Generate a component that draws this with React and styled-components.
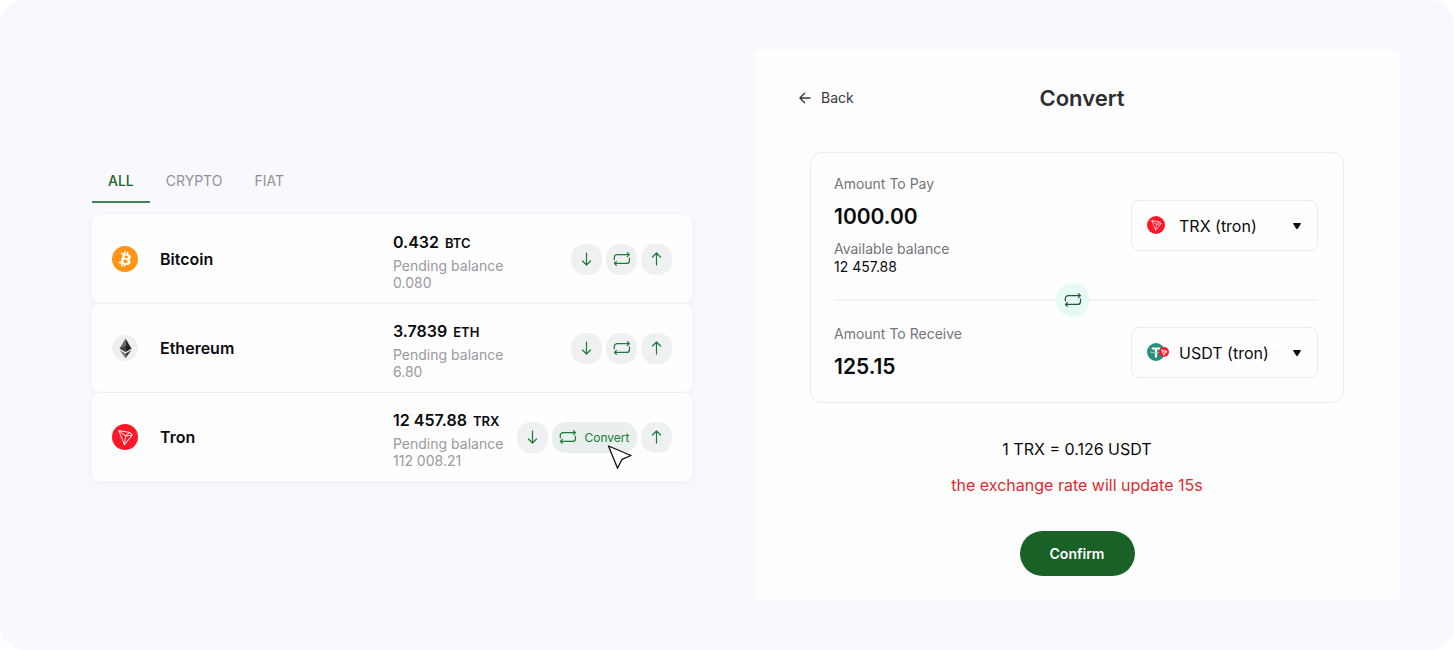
import React, { useState } from "react"
import styled, { createGlobalStyle } from "styled-components"

const GlobalStyle = createGlobalStyle`
  * {
    box-sizing: border-box;
  }

  body {
    margin: 0;
    background: #fff;
    font-family: Inter, "Liberation Sans", sans-serif;
    color: #0b0b0e;
  }

  button, input, select {
    font-family: inherit;
    color: inherit;
  }

  button {
    cursor: pointer;
  }
`

const Stage = styled.main`
  display: grid;
  grid-template-columns: 600fr 644fr;
  column-gap: 63px;
  align-items: center;
  min-height: 100vh;
  padding: 51px 55px 50px 92px;
  border-radius: 24px;
  background: #f9f8fe;
`

const Tabs = styled.div`
  display: flex;
  margin-bottom: 12px;
`

const Tab = styled.button`
  padding: 0 16px 9px;
  border: 0;
  border-bottom: 2px solid ${p => (p.$active ? "#4a7f56" : "transparent")};
  background: none;
  color: ${p => (p.$active ? "#17642b" : "#929196")};
  font-size: 14px;
  font-weight: ${p => (p.$active ? 500 : 400)};
  line-height: 22px;
`

const WalletList = styled.ul`
  display: flex;
  flex-direction: column;
  gap: 1px;
  margin: 0;
  padding: 0;
  list-style: none;
`

const WalletRow = styled.li`
  display: grid;
  grid-template-columns: 26px 211fr 279fr;
  column-gap: 22px;
  align-items: center;
  height: 88px;
  padding: 0 20px;
  border-radius: 8px;
  background: #fefefe;
  box-shadow: 0 1px 6px rgba(60, 50, 90, 0.06);
`

const WalletName = styled.h2`
  margin: 0;
  font-size: 16px;
  font-weight: 600;
  line-height: 20px;
`

const WalletDetails = styled.div`
  display: flex;
  align-items: center;
  justify-content: space-between;
`

const Balance = styled.div`
  padding-top: 4px;
  white-space: nowrap;
`

const Amount = styled.p`
  margin: 0 0 4px;
  font-size: 16px;
  font-weight: 600;
  line-height: 20px;

  span {
    margin-left: 6px;
    font-size: 13px;
  }
`

const Pending = styled.p`
  margin: 0;
  color: #9a999d;
  font-size: 14px;
  line-height: 17px;
`

const Actions = styled.div`
  display: flex;
  gap: 4px;
`

const ActionButton = styled.button`
  display: flex;
  align-items: center;
  justify-content: center;
  gap: 7px;
  width: ${p => (p.$wide ? "85px" : "31px")};
  height: 31px;
  padding: 0;
  border: 0;
  border-radius: 14px;
  background: ${p => (p.$wide ? "#e9efec" : "#eff0f2")};
  color: #1b7a37;
  font-size: 12px;
`

const ActionSlot = styled.div`
  position: relative;
`

const Pointer = styled.svg`
  position: absolute;
  top: 22px;
  left: 54px;
  pointer-events: none;
`

const Panel = styled.section`
  display: flex;
  flex-direction: column;
  min-height: 549px;
  background: #fefefe;
  box-shadow: 0 0 8px #fdfdff;
`

const PanelHeader = styled.header`
  display: grid;
  grid-template-columns: 1fr auto 1fr;
  align-items: center;
  padding: 33px 34px 0 44px;
`

const BackLink = styled.a`
  display: flex;
  align-items: center;
  gap: 10px;
  color: #38373c;
  font-size: 14px;
  line-height: 20px;
  text-decoration: none;
`

const Title = styled.h1`
  margin: 0;
  color: #2e2d32;
  font-size: 22px;
  font-weight: 600;
  line-height: 28px;
`

const ConvertForm = styled.form`
  display: flex;
  flex-direction: column;
  align-items: center;
  padding: 40px 55px 24px;
`

const ConvertBox = styled.div`
  width: 100%;
  padding: 22px 25px 22px 23px;
  border: 1px solid #ececef;
  border-radius: 12px;
`

const Side = styled.div`
  display: flex;
  align-items: center;
  justify-content: space-between;
`

const Label = styled.label`
  display: block;
  color: #75747a;
  font-size: 14px;
  line-height: 18px;
`

const AmountInput = styled.input`
  display: block;
  width: 200px;
  height: 26px;
  margin: 11px 0 0;
  padding: 0;
  border: 0;
  outline: 0;
  background: none;
  font-size: 21px;
  font-weight: 600;
  line-height: 26px;
`

const Available = styled.div`
  margin-top: 10px;
  color: #75747a;
  font-size: 14px;
  line-height: 18px;

  strong {
    display: block;
    color: #0b0b0e;
    font-weight: 400;
  }
`

const SelectWrap = styled.div`
  position: relative;
  width: 187px;

  select {
    width: 100%;
    height: 51px;
    padding: 0 40px 0 47px;
    border: 1px solid #ececef;
    border-radius: 8px;
    background: #fefefe;
    font-size: 16px;
    appearance: none;
  }
`

const SelectIcon = styled.span`
  position: absolute;
  top: 16px;
  left: 16px;
  display: flex;
  pointer-events: none;
`

const Caret = styled.svg`
  position: absolute;
  top: 22px;
  right: 16px;
  pointer-events: none;
`

const Divider = styled.div`
  display: grid;
  grid-template-columns: 223fr 34px 229fr;
  align-items: center;
  margin: 7px 0 8px;

  &::before,
  &::after {
    content: "";
    height: 2px;
    background: #f4f4f6;
  }
`

const SwapButton = styled.button`
  display: flex;
  align-items: center;
  justify-content: center;
  height: 34px;
  padding: 0;
  border: 0;
  border-radius: 50%;
  background: #e8faf6;
  color: #1c5c2a;
`

const Rate = styled.p`
  margin: 36px 0 0;
  font-size: 16px;
  line-height: 20px;
`

const RateNotice = styled.p`
  margin: 16px 0 0;
  color: #dc2a30;
  font-size: 16px;
  line-height: 20px;
`

const ConfirmButton = styled.button`
  width: 115px;
  height: 45px;
  margin-top: 36px;
  border: 0;
  border-radius: 23px;
  background: #196127;
  color: #fff;
  font-size: 14px;
  font-weight: 600;
`

const BitcoinIcon = () => (
  <svg width="26" height="26" viewBox="0 0 32 32" aria-hidden="true">
    <circle cx="16" cy="16" r="16" fill="#ff9416" />
    <path
      fill="#fff"
      d="M23.189 14.02c.314-2.096-1.283-3.223-3.465-3.975l.708-2.84-1.728-.43-.69 2.765c-.454-.114-.92-.22-1.385-.326l.695-2.783L15.596 6l-.708 2.839c-.376-.086-.746-.17-1.104-.26l.002-.009-2.384-.595-.46 1.846s1.283.294 1.256.312c.7.175.826.638.805 1.006l-.806 3.235c.048.012.11.03.18.057l-.183-.045-1.13 4.532c-.086.212-.303.531-.793.41.018.025-1.256-.313-1.256-.313l-.858 1.978 2.25.561c.418.105.828.215 1.231.318l-.715 2.872 1.727.43.708-2.84c.472.127.93.245 1.378.357l-.706 2.828 1.728.43.715-2.866c2.948.558 5.164.333 6.097-2.333.752-2.146-.037-3.385-1.588-4.192 1.13-.26 1.98-1.003 2.207-2.538zm-3.95 5.538c-.533 2.147-4.148.986-5.32.695l.95-3.805c1.172.293 4.929.872 4.37 3.11zm.535-5.569c-.487 1.953-3.495.96-4.47.717l.86-3.45c.975.243 4.118.696 3.61 2.733z"
    />
  </svg>
)

const EthereumIcon = () => (
  <svg width="26" height="26" viewBox="0 0 26 26" aria-hidden="true">
    <circle cx="13" cy="13" r="13" fill="#efeff0" />
    <path fill="#6b6b6b" d="M13.5 3.5 7.5 13.6l6 3.5z" />
    <path fill="#2b2b2b" d="M13.5 3.5v13.6l6-3.5z" />
    <path fill="#151515" d="m13.5 10.8-6 2.8 6 3.5 6-3.5z" opacity=".5" />
    <path fill="#7a7a7a" d="m7.5 14.9 6 8.3v-4.8z" />
    <path fill="#3a3a3a" d="m19.5 14.9-6 8.3v-4.8z" />
  </svg>
)

const TronIcon = ({ size = 26 }) => (
  <svg width={size} height={size} viewBox="0 0 32 32" aria-hidden="true">
    <circle cx="16" cy="16" r="16" fill="#ff1728" />
    <path
      fill="#fff"
      d="M21.932 9.913L7.5 7.257l7.595 19.112 10.583-12.894-3.746-3.562zm-.232 1.17l2.208 2.099-6.038 1.093 3.83-3.192zm-5.142 2.973l-6.364-5.278 10.402 1.914-4.038 3.364zm-.453.934l-1.038 8.58L9.472 9.487l6.633 5.502zm.96.455l6.687-1.21-7.67 9.343.983-8.133z"
    />
  </svg>
)

const TetherTronIcon = () => (
  <svg width="22" height="18" viewBox="0 0 22 18" aria-hidden="true">
    <circle cx="9" cy="9" r="9" fill="#26907c" />
    <path
      fill="#fff"
      transform="scale(.5625)"
      d="M17.922 17.383v-.002c-.11.008-.677.042-1.942.042-1.01 0-1.721-.03-1.971-.042v.003c-3.888-.171-6.79-.848-6.79-1.658 0-.809 2.902-1.486 6.79-1.66v2.644c.254.018.982.061 1.988.061 1.207 0 1.812-.05 1.925-.06v-2.643c3.88.173 6.775.85 6.775 1.658 0 .81-2.895 1.485-6.775 1.657m0-3.59v-2.366h5.414V7.819H8.595v3.608h5.414v2.365c-4.4.202-7.709 1.074-7.709 2.118 0 1.044 3.309 1.915 7.709 2.118v7.582h3.913v-7.584c4.393-.202 7.694-1.073 7.694-2.116 0-1.043-3.301-1.914-7.694-2.117"
    />
    <circle cx="17" cy="9" r="5" fill="#ff1728" />
    <path
      fill="none"
      stroke="#fff"
      strokeWidth=".7"
      strokeLinejoin="round"
      d="m14.6 6.9 4.3.8 1.1 1-3.2 3.6zm0 0 2.6 2.2 2.8-.4m-2.8.4 1.7-1.4m-1.7 1.4-.4 3.2"
    />
  </svg>
)

const RepeatIcon = () => (
  <svg width="18" height="16" viewBox="0 0 18 16" fill="none" stroke="currentColor" strokeWidth="1.2" strokeLinecap="round" strokeLinejoin="round" aria-hidden="true">
    <path d="M1.3 8.8V6.6a3 3 0 0 1 3-3H16M14.4 1.6l2 2-2 2" />
    <path d="M16.5 7.2v2.2a3 3 0 0 1-3 3H1.8M3.4 10.4l-2 2 2 2" />
  </svg>
)

const ArrowIcon = ({ up }) => (
  <svg width="13" height="14" viewBox="0 0 13 14" fill="none" stroke="currentColor" strokeWidth="1.2" strokeLinecap="round" strokeLinejoin="round" aria-hidden="true">
    <path d={up ? "M6.5 13V1M2.5 5l4-4 4 4" : "M6.5 1v12M2.5 9l4 4 4-4"} />
  </svg>
)

const BackIcon = () => (
  <svg width="12" height="12" viewBox="0 0 12 12" fill="none" stroke="currentColor" strokeWidth="1.3" strokeLinecap="round" strokeLinejoin="round" aria-hidden="true">
    <path d="M11 6H1M5.6 1.2.9 6l4.7 4.8" />
  </svg>
)

const wallets = [
  { name: "Bitcoin", icon: <BitcoinIcon />, amount: "0.432", code: "BTC", pending: "0.080" },
  { name: "Ethereum", icon: <EthereumIcon />, amount: "3.7839", code: "ETH", pending: "6.80" },
  { name: "Tron", icon: <TronIcon />, amount: "12 457.88", code: "TRX", pending: "112 008.21", hovered: true },
]

const Wallet = ({ wallet }) => (
  <WalletRow>
    {wallet.icon}
    <WalletName>{wallet.name}</WalletName>
    <WalletDetails>
      <Balance>
        <Amount>{wallet.amount}<span>{wallet.code}</span></Amount>
        <Pending>Pending balance</Pending>
        <Pending>{wallet.pending}</Pending>
      </Balance>
      <Actions>
        <ActionButton type="button" aria-label="Receive"><ArrowIcon /></ActionButton>
        <ActionSlot>
          <ActionButton type="button" aria-label="Convert" $wide={wallet.hovered}>
            <RepeatIcon />
            {wallet.hovered && "Convert"}
          </ActionButton>
          {wallet.hovered && (
            <Pointer width="26" height="26" viewBox="0 0 26 26" aria-hidden="true">
              <path d="M2.5 2 25 11.5l-9 3.8-4.5 9z" fill="#fff" stroke="#111" strokeWidth="1.3" strokeLinejoin="round" />
            </Pointer>
          )}
        </ActionSlot>
        <ActionButton type="button" aria-label="Send"><ArrowIcon up /></ActionButton>
      </Actions>
    </WalletDetails>
  </WalletRow>
)

const CurrencySelect = ({ label, icon, option }) => (
  <SelectWrap>
    <select aria-label={label} defaultValue={option}>
      <option>{option}</option>
    </select>
    <SelectIcon>{icon}</SelectIcon>
    <Caret width="10" height="8" viewBox="0 0 10 8" aria-hidden="true">
      <path d="M1.5 1.5h7L5.4 6.6h-.8z" fill="#0b0b0e" stroke="#0b0b0e" strokeLinejoin="round" />
    </Caret>
  </SelectWrap>
)

const App = () => {
  const [tab, setTab] = useState("ALL")
  const [pay, setPay] = useState("1000.00")

  return (
    <>
      <GlobalStyle />
      <Stage>
        <section>
          <Tabs role="tablist">
            {["ALL", "CRYPTO", "FIAT"].map(t => (
              <Tab key={t} type="button" role="tab" aria-selected={t === tab} $active={t === tab} onClick={() => setTab(t)}>
                {t}
              </Tab>
            ))}
          </Tabs>
          <WalletList>
            {wallets.map(w => <Wallet key={w.code} wallet={w} />)}
          </WalletList>
        </section>

        <Panel>
          <PanelHeader>
            <BackLink href="#back"><BackIcon />Back</BackLink>
            <Title>Convert</Title>
          </PanelHeader>

          <ConvertForm onSubmit={e => e.preventDefault()}>
            <ConvertBox>
              <Side>
                <div>
                  <Label htmlFor="pay">Amount To Pay</Label>
                  <AmountInput id="pay" value={pay} onChange={e => setPay(e.target.value)} />
                  <Available>Available balance<strong>12 457.88</strong></Available>
                </div>
                <CurrencySelect label="Currency to pay" option="TRX (tron)" icon={<TronIcon size={18} />} />
              </Side>
              <Divider>
                <SwapButton type="button" aria-label="Swap currencies"><RepeatIcon /></SwapButton>
              </Divider>
              <Side>
                <div>
                  <Label htmlFor="receive">Amount To Receive</Label>
                  <AmountInput id="receive" value="125.15" readOnly />
                </div>
                <CurrencySelect label="Currency to receive" option="USDT (tron)" icon={<TetherTronIcon />} />
              </Side>
            </ConvertBox>
            <Rate>1 TRX = 0.126 USDT</Rate>
            <RateNotice>the exchange rate will update 15s</RateNotice>
            <ConfirmButton type="submit">Confirm</ConfirmButton>
          </ConvertForm>
        </Panel>
      </Stage>
    </>
  )
}

export default App
